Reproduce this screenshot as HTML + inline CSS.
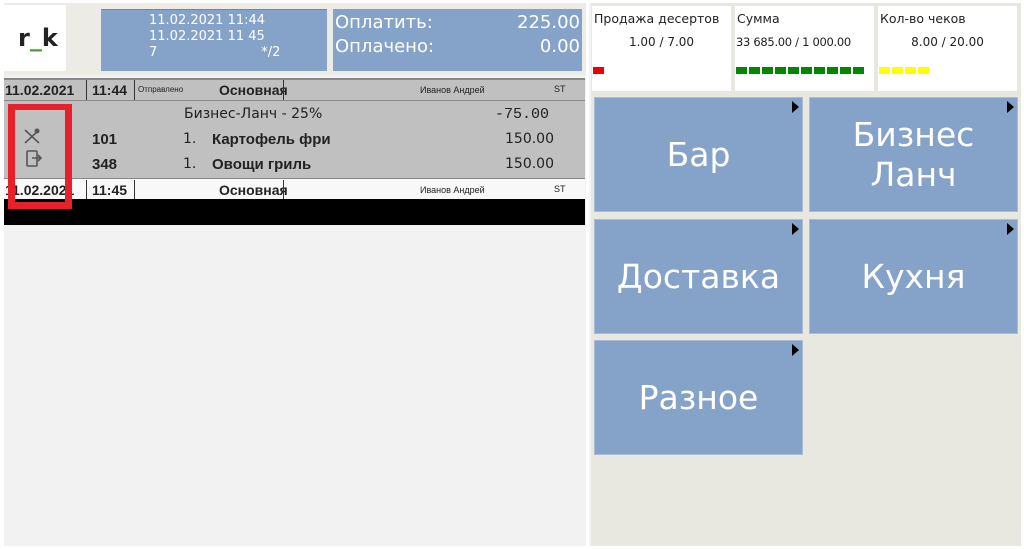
<!DOCTYPE html><html><head><meta charset="utf-8"><style>
*{margin:0;padding:0;box-sizing:border-box}
body{width:1024px;height:549px;background:#fff;position:relative;overflow:hidden;font-family:"Liberation Sans","DejaVu Sans",sans-serif}
.a{position:absolute}
.btn{position:absolute;background:#85a3c9;color:#fff;font-family:"DejaVu Sans",sans-serif;font-size:33px;display:flex;align-items:center;justify-content:center;text-align:center;line-height:40px;border:1px solid #a9bcd6}
.btn:after{content:"";position:absolute;right:3px;top:3px;border-left:7px solid #000;border-top:6px solid transparent;border-bottom:6px solid transparent}
.w{position:absolute;background:#fff;font-family:"DejaVu Sans",sans-serif;font-size:12.5px;color:#222}
.t{font-family:"DejaVu Sans",sans-serif}
.l{font-family:"Liberation Sans",sans-serif}
.sq{display:inline-block;width:11px;height:7px;margin-right:2px}
</style></head><body>
<div class="a" style="left:4px;top:3px;width:582px;height:543px;background:#f2f2f2"></div>
<div class="a" style="left:4px;top:3px;width:582px;height:72px;background:#ecebe6"></div>
<div class="a" style="left:4px;top:5px;width:62px;height:66px;background:#fff"></div>
<div class="a" style="left:18px;top:24px;font-size:24px;font-weight:bold;color:#222;font-family:'DejaVu Sans',sans-serif">r<span style="color:#4a9a3a">_</span>k</div>
<div class="a t" style="left:101px;top:9px;width:226px;height:62px;background:#85a3c9;border-top:1px solid #8870e0;color:#fff;font-size:13px;line-height:16px;padding:3px 0 0 48px">11.02.2021 11:44<br>11.02.2021 11 45<br>7<span style="margin-left:104px">*/2</span></div>
<div class="a t" style="left:333px;top:9px;width:249px;height:62px;background:#85a3c9;color:#fff;font-size:18px;line-height:24px;padding:2px 2px 0 2px">Оплатить:<span style="float:right">225.00</span><br>Оплачено:<span style="float:right">0.00</span></div>
<div class="a" style="left:4px;top:78px;width:581px;height:100px;background:#c0c0c0;border-top:2px solid #888"></div>
<div class="a" style="left:4px;top:100px;width:581px;height:1px;background:#888"></div>
<div class="a l" style="left:5px;top:82px;font-size:14px;font-weight:bold;color:#222">11.02.2021</div>
<div class="a" style="left:86px;top:80px;width:1px;height:20px;background:#333"></div>
<div class="a l" style="left:92px;top:82px;font-size:14px;font-weight:bold;color:#222">11:44</div>
<div class="a" style="left:134px;top:80px;width:1px;height:20px;background:#333"></div>
<div class="a l" style="left:138px;top:85px;font-size:8px;color:#222">Отправлено</div>
<div class="a l" style="left:219px;top:82px;font-size:14px;font-weight:bold;color:#222">Основная</div>
<div class="a" style="left:283px;top:80px;width:1px;height:20px;background:#333"></div>
<div class="a l" style="left:420px;top:85px;font-size:9px;color:#222">Иванов Андрей</div>
<div class="a l" style="left:554px;top:84px;font-size:9px;color:#222">ST</div>
<div class="a t" style="left:184px;top:106px;font-size:14px;color:#222">Бизнес-Ланч - 25%</div>
<div class="a" style="left:495px;top:106px;font-size:15px;color:#222;font-family:'Liberation Mono',monospace">-75.00</div>
<div class="a l" style="left:92px;top:131px;font-size:15px;font-weight:bold;color:#222">101</div>
<div class="a t" style="left:183px;top:131px;font-size:14px;color:#222">1.</div>
<div class="a l" style="left:212px;top:131px;font-size:15px;font-weight:bold;color:#222">Картофель фри</div>
<div class="a t" style="left:505px;top:131px;font-size:14px;color:#222">150.00</div>
<div class="a l" style="left:92px;top:156px;font-size:15px;font-weight:bold;color:#222">348</div>
<div class="a t" style="left:183px;top:156px;font-size:14px;color:#222">1.</div>
<div class="a l" style="left:212px;top:156px;font-size:15px;font-weight:bold;color:#222">Овощи гриль</div>
<div class="a t" style="left:505px;top:156px;font-size:14px;color:#222">150.00</div>
<svg class="a" style="left:22px;top:126px" width="22" height="44" viewBox="0 0 22 44"><path d="M3 4 L17 17 M17 4 L3 17" stroke="#555" stroke-width="1.6" fill="none"/><circle cx="15" cy="5" r="2.5" fill="#555"/><rect x="5" y="25" width="10" height="15" rx="1" stroke="#555" stroke-width="1.6" fill="none"/><path d="M10 32 H19 M16 29 L19 32 L16 35" stroke="#555" stroke-width="1.6" fill="#c0c0c0"/></svg>
<div class="a" style="left:4px;top:178px;width:581px;height:21px;background:#f8f8f8;border-top:1px solid #888"></div>
<div class="a l" style="left:5px;top:182px;font-size:14px;font-weight:bold;color:#222">11.02.2021</div>
<div class="a" style="left:86px;top:180px;width:1px;height:19px;background:#333"></div>
<div class="a l" style="left:92px;top:182px;font-size:14px;font-weight:bold;color:#222">11:45</div>
<div class="a" style="left:134px;top:180px;width:1px;height:19px;background:#333"></div>
<div class="a l" style="left:219px;top:182px;font-size:14px;font-weight:bold;color:#222">Основная</div>
<div class="a" style="left:283px;top:180px;width:1px;height:19px;background:#333"></div>
<div class="a l" style="left:420px;top:185px;font-size:9px;color:#222">Иванов Андрей</div>
<div class="a l" style="left:554px;top:184px;font-size:9px;color:#222">ST</div>
<div class="a" style="left:4px;top:199px;width:581px;height:26px;background:#000"></div>
<div class="a" style="left:8px;top:104px;width:64px;height:105px;border:7px solid #e8202a;border-top-width:6px"></div>
<div class="a" style="left:589px;top:3px;width:432px;height:543px;background:#e8e8e0;border-left:2px solid #f4f4f4"></div>
<div class="w" style="left:592px;top:6px;width:139px;height:85px"><div style="padding:5px 0 0 2px">Продажа десертов</div><div style="text-align:center;margin-top:9px;font-size:12px">1.00 / 7.00</div><div style="margin:13px 0 0 1px"><span class="sq" style="background:#e00"></span></div></div>
<div class="w" style="left:735px;top:6px;width:139px;height:85px"><div style="padding:5px 0 0 2px">Сумма</div><div style="margin-top:9px;padding-left:1px;font-size:11.5px;letter-spacing:-0.3px">33 685.00 / 1 000.00</div><div style="margin:13px 0 0 1px;white-space:nowrap"><span class="sq" style="background:#080"></span><span class="sq" style="background:#080"></span><span class="sq" style="background:#080"></span><span class="sq" style="background:#080"></span><span class="sq" style="background:#080"></span><span class="sq" style="background:#080"></span><span class="sq" style="background:#080"></span><span class="sq" style="background:#080"></span><span class="sq" style="background:#080"></span><span class="sq" style="background:#080"></span></div></div>
<div class="w" style="left:878px;top:6px;width:139px;height:85px"><div style="padding:5px 0 0 2px">Кол-во чеков</div><div style="text-align:center;margin-top:9px;font-size:12px">8.00 / 20.00</div><div style="margin:13px 0 0 1px"><span class="sq" style="background:#ff0"></span><span class="sq" style="background:#ff0"></span><span class="sq" style="background:#ff0"></span><span class="sq" style="background:#ff0"></span></div></div>
<div class="btn" style="left:594px;top:97px;width:209px;height:115px">Бар</div>
<div class="btn" style="left:809px;top:97px;width:209px;height:115px">Бизнес<br>Ланч</div>
<div class="btn" style="left:594px;top:219px;width:209px;height:115px">Доставка</div>
<div class="btn" style="left:809px;top:219px;width:209px;height:115px">Кухня</div>
<div class="btn" style="left:594px;top:340px;width:209px;height:115px">Разное</div>
</body></html>
